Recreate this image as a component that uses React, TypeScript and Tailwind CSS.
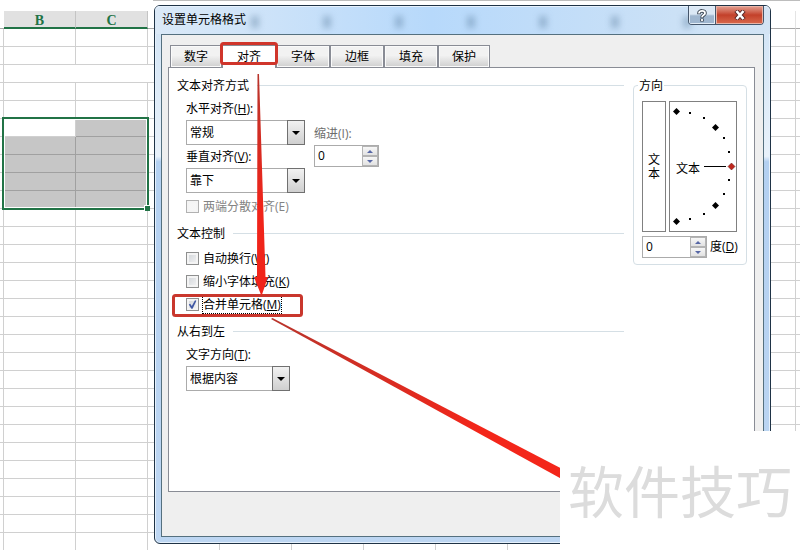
import { useState, type ReactNode } from "react";

const tabs = [
  { label: "数字", width: "w-[52px]" },
  { label: "对齐", width: "w-[54px]" },
  { label: "字体", width: "w-[54px]" },
  { label: "边框", width: "w-[54px]" },
  { label: "填充", width: "w-[54px]" },
  { label: "保护", width: "w-[52px]" },
] as const;

const columns = ["", "B", "C", "", "", "", "", "", "", "", "", "", ""];
const rows = Array.from({ length: 29 }, (_, i) => i);

// points of the half circle in the orientation dial
const bigMarks = [
  [6, 9],
  [45, 25],
  [45, 103],
  [6, 119],
] as const;
const smallMarks = [
  [19, 10],
  [33, 15],
  [53, 35],
  [58, 49],
  [58, 77],
  [53, 91],
  [33, 111],
  [19, 116],
] as const;

function cellClass(row: number, col: number) {
  const selected = row >= 5 && row <= 9 && (col === 1 || col === 2);
  if (selected && !(row === 5 && col === 1)) {
    return "h-[18px] border-b border-r border-[#a0a0a0] bg-[#c6c6c6] p-0";
  }
  if (col === 12 || (row === 2 && (col === 1 || col === 2))) {
    return "h-[18px] border-b border-[#d0d0d0] p-0";
  }
  return "h-[18px] border-b border-r border-[#d0d0d0] p-0";
}

function headClass(name: string, col: number) {
  if (name) {
    return "h-[18px] border-b-2 border-r border-b-[#217346] border-r-[#c4c4c4] bg-[#e1e1e1] p-0 pt-1 font-['Liberation_Serif',serif] text-sm leading-3 font-bold text-[#217346]";
  }
  if (col === 0 || col === 12) {
    return "h-[18px] border-b border-[#a8a8a8] p-0";
  }
  return "h-[18px] border-b border-r border-b-[#a8a8a8] border-r-[#e4e4e4] p-0";
}

function Sheet() {
  return (
    <div className="absolute inset-0 overflow-hidden bg-white pt-[11px]">
      <div className="absolute left-[153px] right-0 top-0 h-px bg-[#bdbdbd]" />
      <table className="w-full table-fixed border-separate border-spacing-0">
        <colgroup>
          {columns.map((_, i) => (
            <col key={i} className={i === 0 ? "w-1" : i === 12 ? "w-auto" : "w-[72px]"} />
          ))}
        </colgroup>
        <thead>
          <tr>
            {columns.map((name, i) => (
              <th key={i} className={headClass(name, i)}>
                {name}
              </th>
            ))}
          </tr>
        </thead>
        <tbody>
          {rows.map((row) => (
            <tr key={row}>
              {columns.map((_, col) => (
                <td key={col} className={cellClass(row, col)} />
              ))}
            </tr>
          ))}
        </tbody>
      </table>
      <div className="absolute left-[2px] top-[117px] h-[93px] w-[147px] border-2 border-[#217346]">
        <div className="h-full border border-white" />
        <div className="absolute -bottom-[3px] -right-[3px] h-[6px] w-[6px] border-l border-t border-white bg-[#217346]" />
      </div>
    </div>
  );
}

function GroupTitle({ children }: { children: ReactNode }) {
  return (
    <div className="flex h-[23px] items-center gap-2">
      <h2>{children}</h2>
      <div className="h-px flex-1 bg-[#d5dfe5]" />
    </div>
  );
}

function Combo({ id, value, width }: { id: string; value: string; width: string }) {
  return (
    <div className={`relative h-[25px] ${width}`}>
      <select
        id={id}
        className="h-full w-full appearance-none border border-[#ababab] bg-white pl-[3px]"
      >
        <option>{value}</option>
      </select>
      <span className="pointer-events-none absolute inset-y-0 right-0 flex w-[18px] items-center justify-center border border-[#707070] bg-linear-to-b from-[#f2f2f2] to-[#cfcfcf]">
        <svg width="8" height="4" viewBox="0 0 8 4" aria-hidden>
          <path d="M0 0h8L4 4z" fill="#000" />
        </svg>
      </span>
    </div>
  );
}

function Spinner({ id }: { id: string }) {
  const [value, setValue] = useState(0);
  return (
    <div className="flex h-[22px] w-[65px] border border-[#ababab] bg-white">
      <input
        id={id}
        value={value}
        onChange={(e) => setValue(Number(e.target.value) || 0)}
        className="w-0 flex-1 pl-[3px] outline-none"
      />
      <div className="flex w-4 flex-col">
        {[1, -1].map((step) => (
          <button
            key={step}
            type="button"
            aria-label={step > 0 ? "增加" : "减少"}
            onClick={() => setValue(value + step)}
            className="flex flex-1 items-center justify-center border border-[#b4b4b4] bg-linear-to-b from-[#f7f7f7] to-[#e2e2e2]"
          >
            <svg width="6" height="3" viewBox="0 0 6 3" aria-hidden>
              <path d={step > 0 ? "M0 3h6L3 0z" : "M0 0h6L3 3z"} fill="#5767a5" />
            </svg>
          </button>
        ))}
      </div>
    </div>
  );
}

type CheckProps = {
  children: ReactNode;
  defaultChecked?: boolean;
  disabled?: boolean;
  focused?: boolean;
};

function Check({ children, defaultChecked, disabled, focused }: CheckProps) {
  return (
    <label className={`flex h-[23px] items-center gap-[3px] ${disabled ? "text-[#838383]" : ""}`}>
      <span className="relative h-[13px] w-[13px]">
        <input
          type="checkbox"
          defaultChecked={defaultChecked}
          disabled={disabled}
          className="peer block h-[13px] w-[13px] appearance-none border border-[#8e8f8f] bg-linear-to-br from-[#cfd3d8] to-[#f6f6f6] shadow-[inset_0_0_0_2px_#f4f4f4] disabled:border-[#b1b1b1] disabled:from-[#f5f5f5]"
        />
        <svg
          className="pointer-events-none absolute inset-0 hidden peer-checked:block"
          width="13"
          height="13"
          viewBox="0 0 13 13"
          aria-hidden
        >
          <path d="M2.800 6.500l1.400-.8L5.800 8l3.200-5.700 1.400.4L6.600 10.800H5.300z" fill="#4058a4" />
        </svg>
      </span>
      <span className={focused ? "border border-dotted border-black leading-4" : "px-px"}>
        {children}
      </span>
    </label>
  );
}

function Alignment() {
  return (
    <div className="min-w-0 flex-1">
      <GroupTitle>文本对齐方式</GroupTitle>
      <div className="flex gap-[9px] pl-[9px]">
        <div>
          <label htmlFor="horizontal" className="flex h-[23px] items-center">
            水平对齐(<u>H</u>):
          </label>
          <Combo id="horizontal" value="常规" width="w-[119px]" />
          <label htmlFor="vertical" className="flex h-[23px] items-center">
            垂直对齐(<u>V</u>):
          </label>
          <Combo id="vertical" value="靠下" width="w-[119px]" />
        </div>
        <div className="pt-[25px]">
          <label htmlFor="indent" className="flex h-[23px] items-center text-[#6d6d6d]">
            缩进(I):
          </label>
          <Spinner id="indent" />
        </div>
      </div>
      <div className="mt-0.5 pl-[9px]">
        <Check disabled>两端分散对齐(E)</Check>
      </div>

      <div className="mt-1">
        <GroupTitle>文本控制</GroupTitle>
        <div className="mt-0.5 pl-[9px]">
          <Check>
            自动换行(<u>W</u>)
          </Check>
          <Check>
            缩小字体填充(<u>K</u>)
          </Check>
          <Check defaultChecked focused>
            合并单元格(<u>M</u>)
          </Check>
        </div>
      </div>

      <div className="mt-1">
        <GroupTitle>从右到左</GroupTitle>
        <div className="pl-[9px]">
          <label htmlFor="direction" className="flex h-[23px] items-center">
            文字方向(<u>T</u>):
          </label>
          <Combo id="direction" value="根据内容" width="w-[104px]" />
        </div>
      </div>
    </div>
  );
}

function Orientation() {
  return (
    <fieldset className="w-[114px] self-start rounded-sm border border-[#d5dfe5] pb-1.5">
      <legend className="ml-1 h-[23px] px-px leading-[23px]">方向</legend>
      <div className="flex gap-[3px] pl-2 pt-1">
        <button
          type="button"
          className="flex h-[131px] w-6 items-center justify-center border border-[#808080] bg-white"
        >
          <span className="w-3 leading-[14px]">文本</span>
        </button>
        <div className="relative flex h-[131px] w-[68px] items-center border border-[#808080] bg-white pl-1.5 pt-1">
          文本
          <svg className="absolute inset-0" width="66" height="129" viewBox="0 0 66 129" aria-hidden>
            {bigMarks.map(([x, y]) => (
              <path key={`${x}-${y}`} transform={`translate(${x} ${y})`} d="M.5-3L4 .5.5 4-3 .5z" />
            ))}
            {smallMarks.map(([x, y]) => (
              <rect key={`${x}-${y}`} x={x} y={y} width="2" height="2" />
            ))}
            <rect x="34" y="64" width="22" height="1" />
            <path d="M61.500 61l3.500 3.500-3.500 3.500-3.500-3.500z" fill="#c0281e" stroke="#5a1010" strokeWidth=".5" />
          </svg>
        </div>
      </div>
      <div className="mt-1 flex items-center gap-[3px] pl-2">
        <Spinner id="degrees" />
        <label htmlFor="degrees">
          度(<u>D</u>)
        </label>
      </div>
    </fieldset>
  );
}

function TitleBar() {
  return (
    <header className="relative -mx-1.5 flex h-7 items-start justify-between rounded-t-[5px] bg-linear-to-r from-[#dbe9f7] via-[#b7d9fb] via-45% to-[#d3e4f4] px-1.5 shadow-[inset_0_1px_0_#e6f1fc]">
      {/* sheet headings showing through the glass */}
      <div className="absolute inset-y-0 left-16 right-0 flex items-center overflow-hidden pt-1 blur-[3px]" aria-hidden>
        {[0, 1, 2, 3, 4, 5, 6].map((i) => (
          <div key={i} className="flex w-[72px] shrink-0 justify-center">
            <div className="h-3 w-2 bg-[#56789c]/40" />
          </div>
        ))}
      </div>
      <h1 className="relative pl-px leading-[27px]">设置单元格格式</h1>
      <div className="relative flex h-[19px] overflow-hidden rounded-b border border-t-0 border-[#45566b]">
        <button
          type="button"
          aria-label="帮助"
          className="flex w-[27px] items-center justify-center border-r border-[#45566b] bg-linear-to-b from-[#dbe8f5] from-45% to-[#9fb6cf] to-55% shadow-[inset_0_0_0_1px_#e3edf7]"
        >
          <svg width="10" height="13" viewBox="0 0 10 13" fill="none" aria-hidden>
            <path d="M2 5.200V4C2 1.200 8 1.200 8 4.200 8 6.200 5 6 5 8.700M5 9.600v2.800" stroke="#3c4653" strokeWidth="3.600" />
            <path d="M2 4.600V4C2 1.200 8 1.200 8 4.200 8 6.200 5 6 5 8.300M5 10v1.900" stroke="#fff" strokeWidth="1.800" />
          </svg>
        </button>
        <button
          type="button"
          aria-label="关闭"
          className="flex w-[47px] items-center justify-center bg-linear-to-b from-[#e3a193] from-0% via-[#c3402a] via-50% to-[#d9694c] shadow-[inset_0_0_0_1px_#e8b3a6]"
        >
          <svg width="12" height="10" viewBox="0 0 12 10" fill="none" aria-hidden>
            <path d="M2 .5l8 9M10 .5l-8 9" stroke="#5c2a2a" strokeWidth="4.400" />
            <path d="M2.500 1l7 8M9.500 1l-7 8" stroke="#fff" strokeWidth="2.600" />
          </svg>
        </button>
      </div>
    </header>
  );
}

function FormatDialog() {
  const [active, setActive] = useState("对齐");
  return (
    <section className="relative flex flex-1 flex-col rounded-md border border-[#1f3346] bg-[linear-gradient(#cfe2f5_0%,#d5e6f6_7%,#e8f1fa_28%,#b3d0f1_29%,#bdd6f2_100%)] px-1.5 pb-1.5 shadow-[inset_0_0_0_1px_#e6f1fc]">
      <TitleBar />
      <div className="flex flex-1 flex-col border border-[#55707f] bg-[#efefef] pb-[44px] pl-1.5 pr-2 pt-2.5">
        <div role="tablist" className="flex pl-0.5">
          {tabs.map((tab) => (
            <button
              key={tab.label}
              type="button"
              role="tab"
              aria-selected={tab.label === active}
              onClick={() => setActive(tab.label)}
              className={`border border-b-0 border-[#898c95] ${tab.width} ${
                tab.label === active
                  ? "relative -mb-px h-[23px] bg-white pb-px"
                  : "h-[22px] bg-linear-to-b from-[#f2f2f2] from-45% to-[#cfcfcf] shadow-[inset_0_0_0_1px_#fafafa]"
              }`}
            >
              {tab.label}
            </button>
          ))}
        </div>
        <div className="flex flex-1 gap-[9px] border border-[#898c95] bg-white pl-2 pr-[7px] pt-1.5">
          <Alignment />
          <Orientation />
        </div>
      </div>
    </section>
  );
}

function Marks() {
  return (
    <svg className="pointer-events-none absolute left-0 top-0" width="800" height="550" aria-hidden>
      <defs>
        <linearGradient id="down" x1="0" y1="0" x2="0" y2="1">
          <stop offset="0" stopColor="#b8342b" />
          <stop offset=".6" stopColor="#f0241a" />
        </linearGradient>
        <linearGradient id="across" x1="0" y1="0" x2="1" y2="0">
          <stop offset="0" stopColor="#b8342b" />
          <stop offset=".6" stopColor="#f3261a" />
        </linearGradient>
      </defs>
      <rect x="221.500" y="43.500" width="55" height="20" rx="2" fill="none" stroke="#d0352b" strokeWidth="3" />
      <rect x="173.500" y="295.500" width="128" height="20" rx="2" fill="none" stroke="#c9372d" strokeWidth="3" />
      <path d="M257.500 74h1.500l6.500 203h2.500l-6.500 19-7.500-19h3z" fill="url(#down)" />
      <path d="M271 319l1.500-1L620 499v12z" fill="url(#across)" />
    </svg>
  );
}

export default function App() {
  return (
    <div className="relative flex h-screen overflow-hidden pb-1.5 pl-[154px] pr-[29px] pt-[5px] font-['Open_Sans','Noto_Sans_CJK_SC',sans-serif] text-xs text-black">
      <Sheet />
      <FormatDialog />
      <Marks />
      <div className="absolute bottom-0 right-0 flex h-[119px] w-[240px] items-center justify-center bg-white text-[56px] leading-none text-[#dcdcdc]">
        软件技巧
      </div>
    </div>
  );
}
